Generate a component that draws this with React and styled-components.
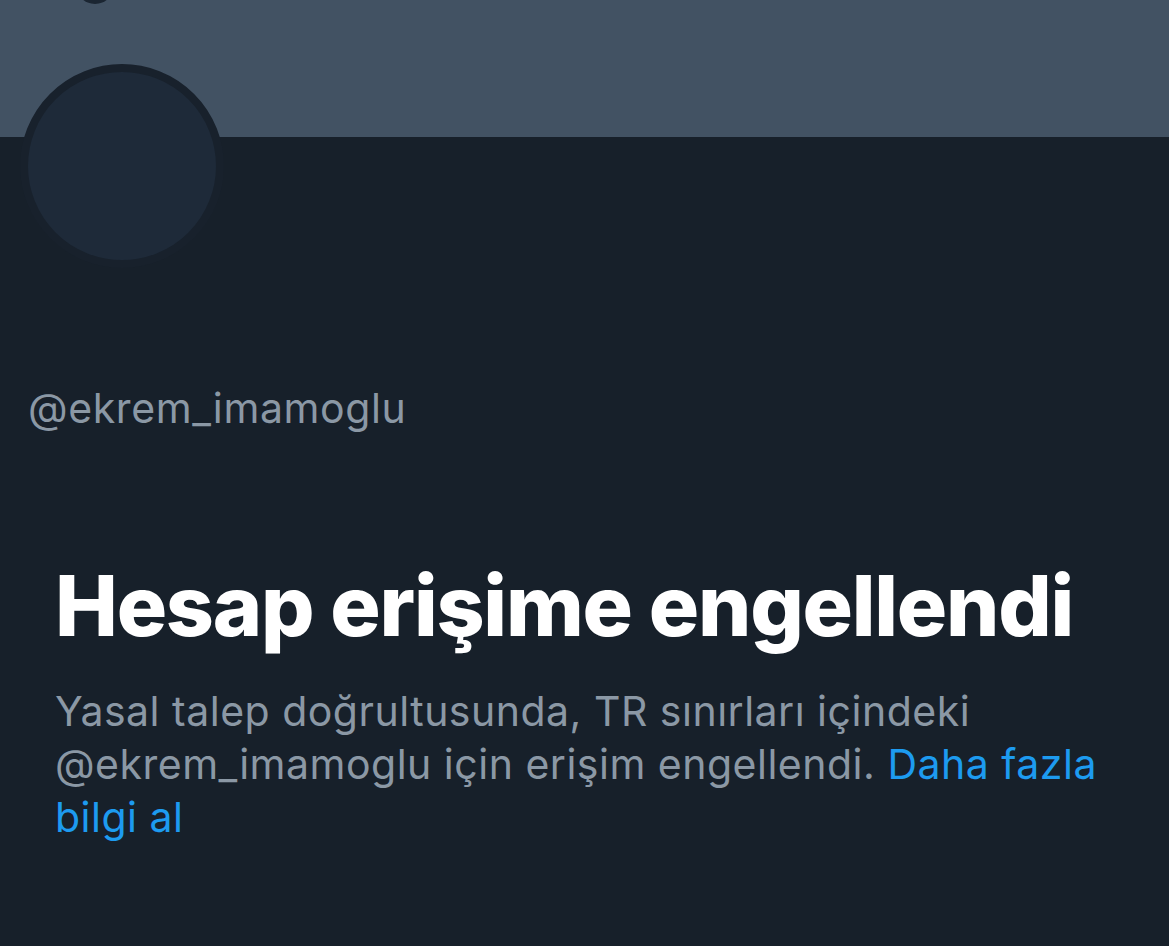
import React from "react";
import styled, { createGlobalStyle } from "styled-components";

const GlobalStyle = createGlobalStyle`
  html, body {
    margin: 0;
    padding: 0;
    background: #17202a;
  }
  body {
    font-family: "Inter", "Liberation Sans", sans-serif;
    -webkit-font-smoothing: antialiased;
  }
`;

const Page = styled.div`
  width: 1169px;
  height: 946px;
  background: #17202a;
  overflow: hidden;
  position: relative;
`;

const Banner = styled.div`
  height: 137px;
  background: #425263;
  position: relative;
`;

// bottom of the back button that sits above the visible area
const TopButton = styled.div`
  position: absolute;
  left: 76px;
  top: -34px;
  width: 38px;
  height: 38px;
  border-radius: 50%;
  background: #1b2632;
`;

const Profile = styled.div`
  padding: 0 0 0 20px;
`;

const Avatar = styled.div`
  width: 188px;
  height: 188px;
  margin-top: -73px;
  border-radius: 50%;
  background: #1e2a39;
  border: 8px solid #18212c;
  position: relative;
`;

const Handle = styled.div`
  margin: 118px 0 0 8px;
  font-size: 41px;
  line-height: 44px;
  color: #8b98a5;
  letter-spacing: 0.6px;
`;

const Notice = styled.section`
  padding: 132px 55px 0 55px;
`;

const Title = styled.h1`
  margin: 0;
  font-size: 84px;
  line-height: 88px;
  font-weight: 800;
  color: #ffffff;
  letter-spacing: -1.25px;
`;

const Body = styled.p`
  margin: 35px 0 0 0;
  font-size: 41px;
  line-height: 53px;
  color: #8b98a5;
  letter-spacing: 0.5px;
`;

const Link = styled.a`
  color: #1d9bf0;
  text-decoration: none;
`;

export default function App() {
  return (
    <Page>
      <GlobalStyle />
      <Banner>
        <TopButton />
      </Banner>
      <Profile>
        <Avatar />
        <Handle>@ekrem_imamoglu</Handle>
      </Profile>
      <Notice>
        <Title>Hesap erişime engellendi</Title>
        <Body>
          Yasal talep doğrultusunda, TR sınırları içindeki @ekrem_imamoglu için
          erişim engellendi. <Link href="#">Daha fazla bilgi al</Link>
        </Body>
      </Notice>
    </Page>
  );
}
